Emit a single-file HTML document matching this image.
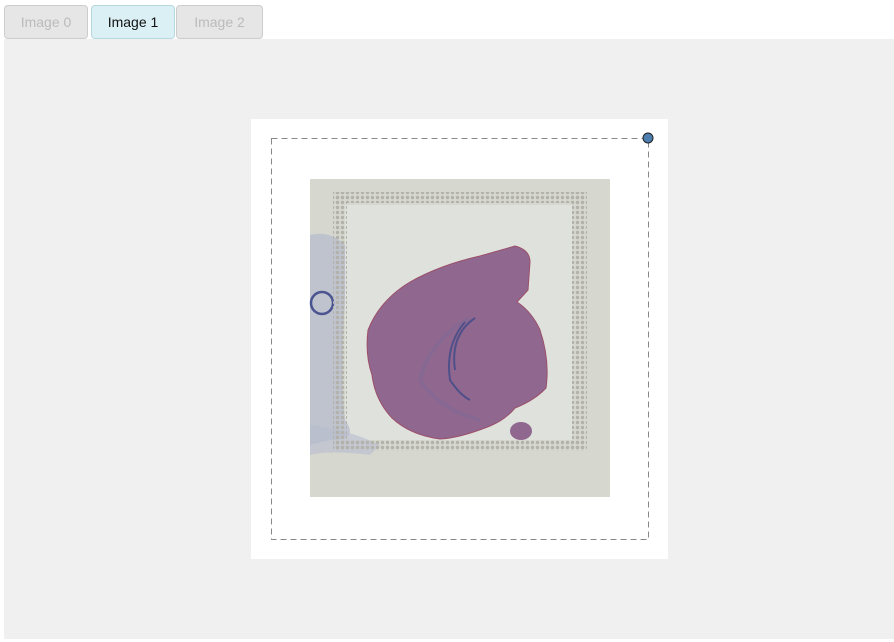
<!DOCTYPE html>
<html><head><style>
html,body{margin:0;padding:0;width:894px;height:642px;background:#fff;overflow:hidden;font-family:"Liberation Sans",sans-serif}
.tab{position:absolute;top:5px;width:84px;border:1px solid #ccc;border-radius:4px;background:#e6e6e6;color:#bbb;font-size:14px;text-align:center;line-height:32px;box-sizing:border-box;height:34px}
.panel{position:absolute;left:4px;top:39px;width:890px;height:600px;background:#f0f0f0}
.card{position:absolute;left:251px;top:119px;width:417px;height:440px;background:#fff}
</style></head><body>
<div class="tab" style="left:4px">Image 0</div>
<div class="tab" style="left:91px;background:#dbf0f4;border-color:#b8d8df;color:#111">Image 1</div>
<div class="tab" style="left:176px;width:87px">Image 2</div>
<div class="panel"></div>
<div class="card"></div>
<svg width="894" height="642" style="position:absolute;left:0;top:0">
<defs>
<pattern id="d" width="5" height="5" patternUnits="userSpaceOnUse"><circle cx="2.5" cy="2.5" r="1.7" fill="#b2b2ab"/></pattern>
</defs>
<rect x="310" y="179" width="300" height="318" fill="#d6d8cf"/>
<rect x="345" y="205" width="228" height="235" fill="#dfe2dc"/>
<path d="M310 235 Q330 230 345 245 L345 300 Q340 380 345 420 Q360 440 330 440 L310 445Z" fill="#b5bacd" opacity=".7"/>
<path d="M310 425 Q350 430 380 445 L370 455 Q330 450 310 455Z" fill="#b8bdcf" opacity=".6"/>
<circle cx="322" cy="303" r="11" fill="none" stroke="#4a5490" stroke-width="2.5"/>
<rect x="333" y="192" width="252" height="11" fill="url(#d)"/>
<rect x="333" y="440" width="252" height="11" fill="url(#d)"/>
<rect x="333" y="192" width="14" height="259" fill="url(#d)"/>
<rect x="572" y="192" width="15" height="259" fill="url(#d)"/>
<path d="M368 330 Q380 300 410 282 Q440 265 480 256 L515 246 Q530 250 530 262 L528 290 L517 302 Q532 312 540 330 Q550 360 546 388 Q535 400 515 408 Q505 420 490 426 Q460 438 440 439 Q410 435 392 418 Q375 400 372 375 Q365 355 368 330Z" fill="#90688f" stroke="#9b4f6a" stroke-width="1"/>
<path d="M470 318 Q430 340 420 380 Q440 410 480 420" fill="none" stroke="#7c6895" stroke-width="4" opacity=".5"/>
<path d="M475 318 Q450 335 455 370" fill="none" stroke="#4f4f8a" stroke-width="2"/>
<path d="M465 322 Q445 345 450 380 Q460 395 470 400" fill="none" stroke="#4f4f8a" stroke-width="2"/>
<ellipse cx="521" cy="431" rx="11" ry="9" fill="#90688f"/>
<rect x="271.5" y="138.5" width="377" height="401" fill="none" stroke="#888" stroke-dasharray="6,4"/>
<circle cx="648" cy="138" r="5" fill="#4c7fb0" stroke="#222" stroke-width="1"/>
</svg>
</body></html>
